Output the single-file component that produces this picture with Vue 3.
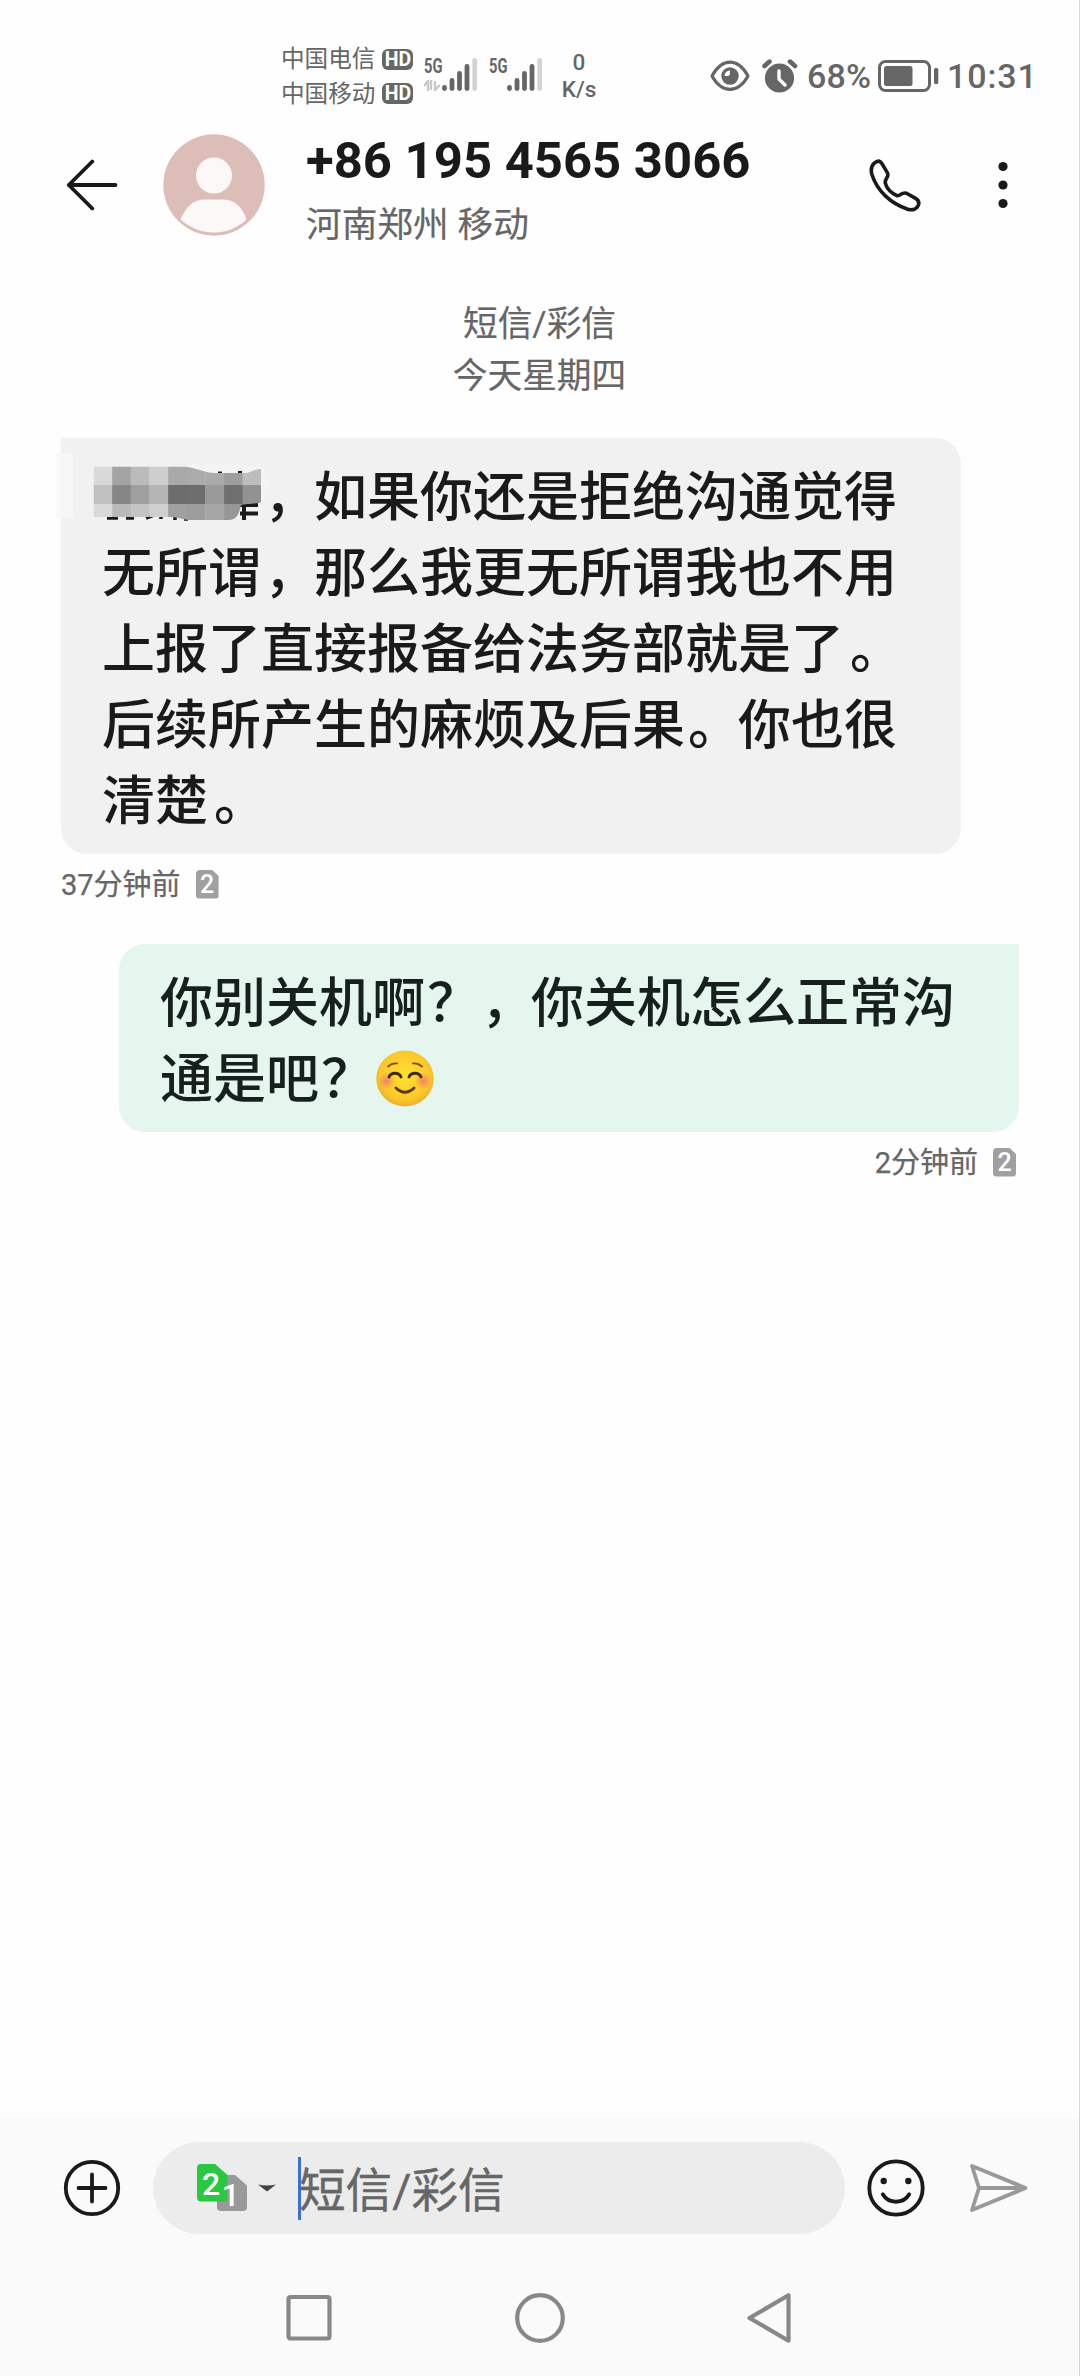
<script setup>
const carriers = ['中国电信', '中国移动']
const bars = [
  { x: 2.5, y: 27, dim: false },
  { x: 10, y: 20, dim: false },
  { x: 17.5, y: 13, dim: false },
  { x: 25, y: 6, dim: false },
  { x: 32.7, y: 0, dim: true }
]
const mosaic = [
  ['#d9d9d9', '#a4a4a4', '#bbbbbb', '#cecece', '#a9a9a9', '#ababab', '#aaaaaa', '#9e9e9e', '#bdbdbd'],
  ['#c0c0c0', '#868686', '#9f9f9f', '#b5b5b5', '#6d6d6d', '#6e6e6e', '#9a9a9a', '#6f6f6f', '#929292'],
  ['#d9d9d9', '#b9b9b9', '#c4c4c4', '#cfcfcf', '#a0a0a0', '#9d9d9d', '#a6a6a6', '#969696', '#929292']
]
const rowTop = [0, 18.5, 37.5]
const rowHeight = [18.5, 19, 18]
</script>

<template>
  <div class="phone">
    <header class="status">
      <div class="carriers">
        <div v-for="c in carriers" :key="c" class="carrier">
          <span>{{ c }}</span><b class="hd">HD</b>
        </div>
      </div>
      <div v-for="n in 2" :key="n" class="signal">
        <div class="net">
          <span class="g5">5G</span>
          <svg v-if="n === 1" class="updown" width="16" height="12" viewBox="0 0 16 12">
            <path d="M0 6L4 1V11M7 0V10M11 11V1M11 10L16 5" fill="none" stroke="#c9c9c9" stroke-width="2.4" />
          </svg>
        </div>
        <svg width="36" height="34" viewBox="0 0 36 34">
          <rect v-for="b in bars" :key="b.x" :x="b.x - 2.4" :y="b.y" width="4.8" :height="33 - b.y" rx="2.4" :fill="b.dim ? '#d4d4d4' : '#666'" />
        </svg>
      </div>
      <div class="speed"><span>0</span><span>K/s</span></div>
      <div class="right">
        <svg class="eye" width="40" height="32" viewBox="0 0 40 32">
          <path d="M2 16C7 7 13 2.2 20 2.2S33 7 38 16C33 25 27 29.3 20 29.3S7 25 2 16Z" fill="none" stroke="#666" stroke-width="3.2" stroke-linejoin="round" />
          <circle cx="20" cy="16" r="8.7" fill="#666" />
          <path d="M14.5 16A5.5 5.5 0 0 1 20 10.5V14A2.5 2.5 0 0 1 18 16Z" fill="#fff" />
        </svg>
        <svg class="alarm" width="36" height="34" viewBox="0 0 36 34">
          <circle cx="17.5" cy="19" r="14.6" fill="#666" />
          <path d="M2.5 7L7.5 2.6M28 2.6L33 7" stroke="#666" stroke-width="4.6" stroke-linecap="round" />
          <path d="M17 12V20L23 26" fill="none" stroke="#fff" stroke-width="3.4" stroke-linecap="round" stroke-linejoin="round" />
        </svg>
        <span class="pct">68%</span>
        <svg class="battery" width="62" height="32" viewBox="0 0 62 32">
          <rect x="1.5" y="1.5" width="50" height="29" rx="6" fill="none" stroke="#666" stroke-width="3" />
          <rect x="6" y="6" width="28.5" height="20" rx="2.5" fill="#666" />
          <rect x="56" y="8" width="4.3" height="16" rx="1.5" fill="#666" />
        </svg>
        <span class="time">10:31</span>
      </div>
    </header>

    <section class="contact">
      <svg class="back" width="52" height="52" viewBox="0 0 52 52">
        <path d="M49.5 26H2.8M26.3 2.5L2.8 26L26.3 49.5" fill="none" stroke="#1a1a1a" stroke-width="3.8" stroke-linecap="round" stroke-linejoin="round" />
      </svg>
      <svg class="avatar" width="102" height="102" viewBox="0 0 102 102">
        <circle cx="51" cy="51" r="50.7" fill="#ddbdb7" />
        <circle cx="51" cy="41.5" r="18" fill="#fcf8f7" />
        <path d="M17.5 85.5C23 72 31 65.5 42 65.5H60C71 65.5 79 72 83.5 85.5C75 94 63 98.5 51 98.5S27 94 17.5 85.5Z" fill="#fcf8f7" />
      </svg>
      <div class="who">
        <h1>+86 195 4565 3066</h1>
        <p>河南郑州 移动</p>
      </div>
      <svg class="call" width="54" height="54" viewBox="0 0 54 54">
        <path d="M5.3 5.2C9 1.8 11.2 3 12.8 5.4L18.3 14.6C20.8 19 15.6 19.8 16.3 25.2C17.5 31 23 35.6 27.7 37.5C31 38.8 32.6 33.6 37.5 35.2L46.6 40.4C50 42.5 50.8 45 48.7 48.4C46 52.3 42.6 52.3 38.7 51.2C21.5 45.5 8.2 33 2.9 16.5C1.7 12 2.2 8 5.3 5.2Z" fill="none" stroke="#1a1a1a" stroke-width="3.6" stroke-linejoin="round" />
      </svg>
      <svg class="more" width="10" height="48" viewBox="0 0 10 48">
        <circle cx="5" cy="5.5" r="4.6" fill="#1a1a1a" /><circle cx="5" cy="24" r="4.6" fill="#1a1a1a" /><circle cx="5" cy="42.5" r="4.6" fill="#1a1a1a" />
      </svg>
    </section>

    <main class="thread">
      <div class="day"><span>短信/彩信</span><span>今天星期四</span></div>

      <div class="bubble incoming">
        <p><span class="masked"></span><i class="pt">，</i>如果你还是拒绝沟通觉得</p>
        <p>无所谓<i class="pt">，</i>那么我更无所谓我也不用</p>
        <p>上报了直接报备给法务部就是了<i class="pt stop">。</i></p>
        <p>后续所产生的麻烦及后果<i class="pt">。</i>你也很</p>
        <p>清楚<i class="pt stop">。</i></p>
        <svg class="mosaic" width="270" height="86" viewBox="0 0 270 86">
          <defs>
            <clipPath id="brush">
              <path d="M73.5 16.5H164C178 18 184 23 195 23H225C231 23 234 19 241 19V52C238 54 224 54 221 55C219 64 217 70 208 70H170C162 70 160 67 150 67H73.5Z" />
            </clipPath>
          </defs>
          <rect x="36" y="3" width="17" height="65" rx="1" fill="#f6f6f6" />
          <rect x="4" y="5" width="36" height="60" fill="#fdfdfd" opacity=".6" />
          <path d="M164 15C190 16 215 12 240 17C252 22 254 42 242 52H220Z" fill="#f4f4f4" />
          <path d="M218 55H238M220 63.5H238M224 55V70M198 23.5H202M218 23H222" fill="none" stroke="#1a1a1a" stroke-width="4" />
          <path d="M87 68H98M106 68H114M126 68L134 65M141 66V69M155 67V70M164 69H168" fill="none" stroke="#1a1a1a" stroke-width="3.5" />
          <g clip-path="url(#brush)">
            <g v-for="(row, r) in mosaic" :key="r">
              <rect v-for="(c, i) in row" :key="i" :x="73.5 + i * 18.65" :y="16.5 + rowTop[r]" width="18.9" :height="rowHeight[r] + 0.3" :fill="c" />
            </g>
          </g>
        </svg>
      </div>
      <div class="meta">
        <span>37分钟前</span>
        <span class="sim">2</span>
      </div>

      <div class="bubble outgoing">
        <p>你别关机啊<i class="pt ask">？</i><i class="pt">，</i>你关机怎么正常沟</p>
        <p>通是吧<i class="pt ask">？</i><svg class="emoji" width="58" height="57" viewBox="0 0 58 57">
            <defs>
              <radialGradient id="face" cx=".5" cy=".45" r=".55"><stop offset="0" stop-color="#fde030" /><stop offset=".8" stop-color="#fbc72b" /><stop offset="1" stop-color="#efab30" /></radialGradient>
              <radialGradient id="blush"><stop offset="0" stop-color="#ed7770" stop-opacity=".85" /><stop offset="1" stop-color="#ed7770" stop-opacity="0" /></radialGradient>
            </defs>
            <ellipse cx="29" cy="28.5" rx="28.7" ry="28" fill="url(#face)" />
            <circle cx="10.5" cy="31" r="8.5" fill="url(#blush)" /><circle cx="47.5" cy="31" r="8.5" fill="url(#blush)" />
            <path d="M13 27C15 22 23 22 25 27M33 27C35 22 43 22 45 27" fill="none" stroke="#422b0d" stroke-width="2.9" stroke-linecap="round" />
            <path d="M12 16.5Q16 12.8 21 13.4M37 13.4Q42 12.8 46 16.5" fill="none" stroke="#7a4e1e" stroke-width="1.8" stroke-linecap="round" />
            <path d="M20 38Q29 46.5 38 38" fill="none" stroke="#5a3b12" stroke-width="3" stroke-linecap="round" />
          </svg></p>
      </div>
      <div class="meta own">
        <span>2分钟前</span>
        <span class="sim">2</span>
      </div>
    </main>

    <footer>
      <div class="composer">
        <svg class="plus" width="58" height="58" viewBox="0 0 58 58">
          <circle cx="29" cy="29" r="26.2" fill="none" stroke="#1a1a1a" stroke-width="3.8" />
          <path d="M29 15.5V42.5M15.5 29H42.5" stroke="#1a1a1a" stroke-width="3.8" stroke-linecap="round" />
        </svg>
        <div class="input">
          <svg class="sims" width="54" height="50" viewBox="0 0 54 50">
            <path d="M25 12H39L51 22.5V44A4 4 0 0 1 47 48H25A4 4 0 0 1 21 44V16A4 4 0 0 1 25 12Z" fill="#999" />
            <path d="M5 1H19L31.5 12V35A4 4 0 0 1 27.5 38.5H5A4 4 0 0 1 1 35V5A4 4 0 0 1 5 1Z" fill="#28c940" />
            <text x="15.2" y="32" class="simtext">2</text>
            <text x="34.5" y="42.5" class="simtext">1</text>
          </svg>
          <svg class="drop" width="18" height="8" viewBox="0 0 18 8"><path d="M0 0.5Q9 2.5 18 0.5L9 7.5Z" fill="#444" /></svg>
          <span class="cursor"></span>
          <span class="hint">短信/彩信</span>
        </div>
        <svg class="smile" width="58" height="58" viewBox="0 0 58 58">
          <circle cx="29" cy="29" r="26.7" fill="none" stroke="#1a1a1a" stroke-width="3.8" />
          <circle cx="16.7" cy="22" r="3.2" fill="#1a1a1a" /><circle cx="41.3" cy="22" r="3.2" fill="#1a1a1a" />
          <path d="M15.8 35.3C21.5 45.2 36.5 45.2 42.2 35.3" fill="none" stroke="#1a1a1a" stroke-width="3.8" stroke-linecap="round" />
        </svg>
        <svg class="send" width="60" height="50" viewBox="0 0 60 50">
          <path d="M3 3L56.5 25L3 47L10 25ZM10 25H56" fill="none" stroke="#999" stroke-width="3.8" stroke-linejoin="round" />
        </svg>
      </div>
      <nav>
        <svg width="52" height="52" viewBox="0 0 52 52"><rect x="5.5" y="5" width="41" height="41.5" rx="2" fill="none" stroke="#888" stroke-width="4.2" /></svg>
        <svg width="52" height="52" viewBox="0 0 52 52"><circle cx="26" cy="26" r="22.8" fill="none" stroke="#888" stroke-width="4.2" /></svg>
        <svg width="52" height="52" viewBox="0 0 52 52"><path d="M44.5 3.3V48.7L5.5 26Z" fill="none" stroke="#888" stroke-width="4.2" stroke-linejoin="round" /></svg>
      </nav>
    </footer>
  </div>
</template>

<style>
body { margin: 0; background: #fefefe; }
</style>

<style scoped>
* { box-sizing: border-box; }
svg { display: block; flex: none; }
p, h1 { margin: 0; }
.phone {
  width: 1080px; height: 2376px; display: flex; flex-direction: column; overflow: hidden;
  background: #fefefe; border-right: 1px solid #d6d6d6; color: #666;
  font-family: Roboto, "Noto Sans CJK SC", sans-serif;
}
.status { height: 120px; flex: none; display: flex; align-items: flex-start; padding: 42px 0 0 281px; }
.carriers { display: flex; flex-direction: column; width: 143px; }
.carrier { height: 34.5px; display: flex; align-items: center; gap: 7px; font-size: 23.6px; line-height: 34px; white-space: nowrap; }
.hd { width: 31px; height: 21px; border-radius: 6px; background: #666; color: #fff; font-size: 19.5px; line-height: 21.5px; text-align: center; font-weight: 700; }
.signal { display: flex; width: 65px; padding-top: 16px; }
.net { width: 18px; height: 34px; }
.g5 { display: block; font-size: 21px; line-height: 16px; font-weight: 700; transform: scaleX(.7); transform-origin: left; }
.updown { margin-top: 6px; }
.speed { display: flex; flex-direction: column; align-items: center; width: 50px; font-size: 22.5px; font-weight: 500; line-height: 27px; padding-top: 7px; }
.right { display: flex; align-items: center; height: 32px; margin: 18px 0 0 106px; font-weight: 500; }
.alarm { margin-left: 12px; }
.pct { font-size: 34px; margin-left: 9px; width: 68px; letter-spacing: .2px; }
.battery { margin-left: 3px; }
.time { font-size: 34px; margin-left: 7px; letter-spacing: .9px; }

.contact { height: 130px; flex: none; display: flex; align-items: center; padding-left: 66px; }
.avatar { margin-left: 45px; }
.who { margin-left: 41px; width: 563px; padding-top: 18px; }
h1 { font-size: 50.8px; font-weight: 700; line-height: 62px; color: #1a1a1a; white-space: nowrap; }
.who p { font-size: 35.7px; line-height: 66px; -webkit-text-stroke: .2px #666; }
.more { margin-left: 75px; }

.thread { flex: 1; display: flex; flex-direction: column; align-items: flex-start; padding-left: 61px; }
.day { align-self: center; margin-left: -61px; padding-top: 48px; height: 188px; display: flex; flex-direction: column; align-items: center; font-size: 34.7px; line-height: 52px; -webkit-text-stroke: .2px #666; }
.bubble { position: relative; width: 900px; padding: 22px 41px 14px; font-size: 53px; line-height: 76px; font-weight: 500; color: #1a1a1a; }
.bubble p { display: flex; align-items: center; height: 76px; white-space: nowrap; }
.incoming { background: #f1f1f1; border-radius: 0 26px 26px 26px; }
.outgoing { background: #e4f6ee; border-radius: 26px 0 26px 26px; margin: 38px 0 0 58px; color: #17201c; }
.masked { width: 159px; }
.pt { font-style: normal; width: 53px; padding-left: 3px; }
.stop { padding-left: 6px; }
.ask { padding-left: 2px; }
.mosaic { position: absolute; left: -41px; top: 12px; }
.emoji { margin-left: 4px; margin-top: -4px; }
.meta { display: flex; align-items: center; height: 44px; margin-top: 8px; font-size: 29px; line-height: 40px; gap: 15px; }
.meta span:first-child { margin-top: 1px; -webkit-text-stroke: .25px #666; }
.own { align-self: flex-end; margin-right: 63px; }
.sim {
  width: 23px; height: 29px; background: #a0a0a0; color: #fff; font-size: 25px; line-height: 30px; font-weight: 500; text-align: center;
  border-radius: 4px; clip-path: polygon(0 0, 70% 0, 100% 22%, 100% 100%, 0 100%);
}

footer { height: 258px; flex: none; background: #fafafa; }
.composer { display: flex; align-items: center; padding: 24px 0 0 63px; }
.input { margin-left: 32px; width: 692px; height: 92px; border-radius: 46px; background: #ececec; display: flex; align-items: center; padding-left: 43px; }
.simtext { fill: #fff; font-size: 32px; font-weight: 500; text-anchor: middle; font-family: Roboto, sans-serif; }
.drop { margin-left: 8px; }
.cursor { width: 3px; height: 63px; background: #3a6fe0; margin-left: 22px; }
.hint { font-size: 46.6px; line-height: 60px; white-space: nowrap; margin: 5px 0 0 -2px; -webkit-text-stroke: .4px #666; }
.smile { margin-left: 22px; }
.send { margin-left: 44px; }
nav { display: flex; justify-content: space-between; padding: 58px 283px 0 283px; }
</style>
